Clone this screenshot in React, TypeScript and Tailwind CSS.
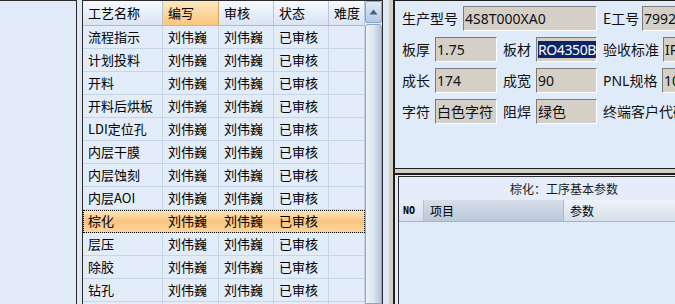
import React from "react";

const steps = [
  "流程指示",
  "计划投料",
  "开料",
  "开料后烘板",
  "LDI定位孔",
  "内层干膜",
  "内层蚀刻",
  "内层AOI",
  "棕化",
  "层压",
  "除胶",
  "钻孔",
];

function Label({ className, children }: { className: string; children: React.ReactNode }) {
  return (
    <div
      className={
        "h-[25px] shrink-0 flex items-center whitespace-nowrap text-[14px] text-[#111] " + className
      }
    >
      {children}
    </div>
  );
}

function Field({ className, children }: { className: string; children: React.ReactNode }) {
  return (
    <div
      className={
        "h-[25px] shrink-0 flex items-center overflow-hidden whitespace-nowrap bg-[#d4d0c8] border border-t-[#7c7c7c] border-l-[#7c7c7c] border-b-white border-r-white pl-[1px] text-[14px] text-[#111] font-['Noto_Sans','Noto_Sans_CJK_SC',sans-serif] " +
        className
      }
    >
      {children}
    </div>
  );
}

function Row({ name, selected }: { name: string; selected: boolean }) {
  const cell = selected
    ? "h-full flex items-center pl-[5px] whitespace-nowrap overflow-hidden shrink-0"
    : "h-full flex items-center pl-[5px] whitespace-nowrap overflow-hidden shrink-0 border-r border-[#c6d5e9]";
  return (
    <div
      className={
        selected
          ? "h-[23px] shrink-0 flex border-b border-[#c6d5e9] bg-linear-to-b from-[#fee9c4] via-[#f9c47d] to-[#fcd69e] outline-1 outline-dotted outline-black -outline-offset-1"
          : "h-[23px] shrink-0 flex border-b border-[#c6d5e9]"
      }
    >
      <div className={cell + " w-[80px]"}>{name}</div>
      <div className={cell + " w-[56px]"}>刘伟巍</div>
      <div className={cell + " w-[55px]"}>刘伟巍</div>
      <div className={cell + " w-[55px]"}>已审核</div>
      <div className={cell + " w-[36px]"}></div>
    </div>
  );
}

function EmptyRow() {
  const cell = "h-full shrink-0 border-r border-[#c6d5e9]";
  return (
    <div className="h-[23px] shrink-0 flex border-b border-[#c6d5e9]">
      <div className={cell + " w-[80px]"} />
      <div className={cell + " w-[56px]"} />
      <div className={cell + " w-[55px]"} />
      <div className={cell + " w-[55px]"} />
      <div className={cell + " w-[36px]"} />
    </div>
  );
}

export default function App() {
  const hcell =
    "h-full flex items-center pl-[5px] shrink-0 border-r border-[#b7c8de] bg-linear-to-b from-[#f6f9fd] to-[#d9e4f2]";
  return (
    <div className="w-[675px] h-[304px] overflow-hidden flex bg-[#dfe9f6] font-['Noto_Sans_CJK_SC',sans-serif] text-black">
      {/* left panel */}
      <div className="w-[77px] h-full shrink-0 border-t border-r border-[#2b2b2b] bg-[#e0eaf8]" />
      <div className="w-[5px] shrink-0" />

      {/* process table */}
      <div className="w-[301px] h-full shrink-0 flex border-t border-x border-[#2b2b2b] bg-[#e3edf9]">
        <div className="w-[282px] h-full flex flex-col text-[13px] overflow-hidden">
          <div className="h-[25px] shrink-0 flex border-b border-[#a9bcd6]">
            <div className={hcell + " w-[80px]"}>工艺名称</div>
            <div className="h-full flex items-center pl-[5px] shrink-0 border-r border-[#d9a65a] w-[56px] bg-linear-to-b from-[#fde8bf] to-[#f8c67e]">
              编写
            </div>
            <div className={hcell + " w-[55px]"}>审核</div>
            <div className={hcell + " w-[55px]"}>状态</div>
            <div className={hcell + " w-[36px]"}>难度</div>
          </div>
          {steps.map((s) => (
            <Row key={s} name={s} selected={s === "棕化"} />
          ))}
          <EmptyRow />
        </div>
        {/* scrollbar */}
        <div className="w-[17px] h-full shrink-0 flex flex-col bg-[#e6edf6]">
          <div className="h-[22px] shrink-0 flex items-center justify-center border border-[#8ba5c9] rounded-[2px] bg-linear-to-b from-[#e3ecf7] to-[#b3c8e4]">
            <svg width="9" height="6" viewBox="0 0 9 6">
              <polygon points="4.5,0.5 8.5,5.5 0.5,5.5" fill="#4c5e7e" />
            </svg>
          </div>
          <div className="flex-1 mt-[1px] border border-[#8fa5c4] rounded-t-[3px] bg-linear-to-r from-[#eef2f8] via-[#dce5f0] to-[#b4c5dc]" />
        </div>
      </div>

      <div className="w-[6px] shrink-0" />
      <div className="w-[4px] shrink-0 bg-[#d4d0c8]" />

      {/* right column */}
      <div className="flex-1 h-full flex flex-col border-l-2 border-[#1e1e1e] min-w-0">
        {/* top form panel */}
        <div className="h-[169px] shrink-0 border-t border-b border-[#1e1e1e] bg-[#e0ebf9] pt-[5px] pl-[7px] flex flex-col gap-[6px]">
          <div className="flex">
            <Label className="w-[61px]">生产型号</Label>
            <Field className="w-[134px]">4S8T000XA0</Field>
            <Label className="w-[45px] pl-[6px]">E工号</Label>
            <Field className="w-[80px]">799201</Field>
          </div>
          <div className="flex">
            <Label className="w-[33px]">板厚</Label>
            <Field className="w-[62px]">1.75</Field>
            <Label className="w-[39px] pl-[6px]">板材</Label>
            <Field className="w-[61px]">
              <span className="bg-[#0a246a] text-white leading-[17px] tracking-[-0.4px]">RO4350B</span>
            </Field>
            <Label className="w-[66px] pl-[6px]">验收标准</Label>
            <Field className="w-[40px]">IPC</Field>
          </div>
          <div className="flex">
            <Label className="w-[33px]">成长</Label>
            <Field className="w-[62px]">174</Field>
            <Label className="w-[39px] pl-[6px]">成宽</Label>
            <Field className="w-[61px]">90</Field>
            <Label className="w-[65px] pl-[6px] font-['Noto_Sans','Noto_Sans_CJK_SC',sans-serif]">PNL规格</Label>
            <Field className="w-[40px]">10</Field>
          </div>
          <div className="flex">
            <Label className="w-[33px]">字符</Label>
            <Field className="w-[62px] font-['Noto_Sans_CJK_SC',sans-serif]">白色字符</Field>
            <Label className="w-[39px] pl-[6px]">阻焊</Label>
            <Field className="w-[61px] font-['Noto_Sans_CJK_SC',sans-serif]">绿色</Field>
            <Label className="w-[100px] pl-[6px]">终端客户代码</Label>
          </div>
        </div>

        {/* splitter */}
        <div className="h-[4px] shrink-0 bg-[#d4d0c8]" />

        {/* bottom params panel */}
        <div className="flex-1 border-t-2 border-[#1e1e1e] pt-[1px] pl-[3px] bg-[#e0ebf9] flex flex-col min-h-0">
          <div className="flex-1 border-t border-l border-[#2e2e2e] flex flex-col">
            <div className="h-[23px] shrink-0 flex items-center pl-[111px] text-[12px] text-[#1a1a1a] bg-[#e4edf9] whitespace-nowrap">
              棕化：工序基本参数
            </div>
            <div className="h-[22px] shrink-0 flex border-b border-[#a3b4cb] text-[12px]">
              <div className="w-[25px] h-full shrink-0 flex items-center pl-[4px] border-r border-[#b3c2d6] bg-linear-to-b from-[#e9eff7] to-[#d6e0ed] font-['DejaVu_Sans_Mono',monospace] text-[10px] font-bold">
                NO
              </div>
              <div className="w-[140px] h-full shrink-0 flex items-center pl-[6px] border-r border-[#a9b8cc] bg-linear-to-b from-[#d6dee9] to-[#bac8da]">
                项目
              </div>
              <div className="flex-1 h-full flex items-center pl-[6px] bg-linear-to-b from-[#eef3f9] to-[#d6e0ec]">
                参数
              </div>
            </div>
            <div className="flex-1 bg-[#e0ebfa]" />
          </div>
        </div>
      </div>
    </div>
  );
}
